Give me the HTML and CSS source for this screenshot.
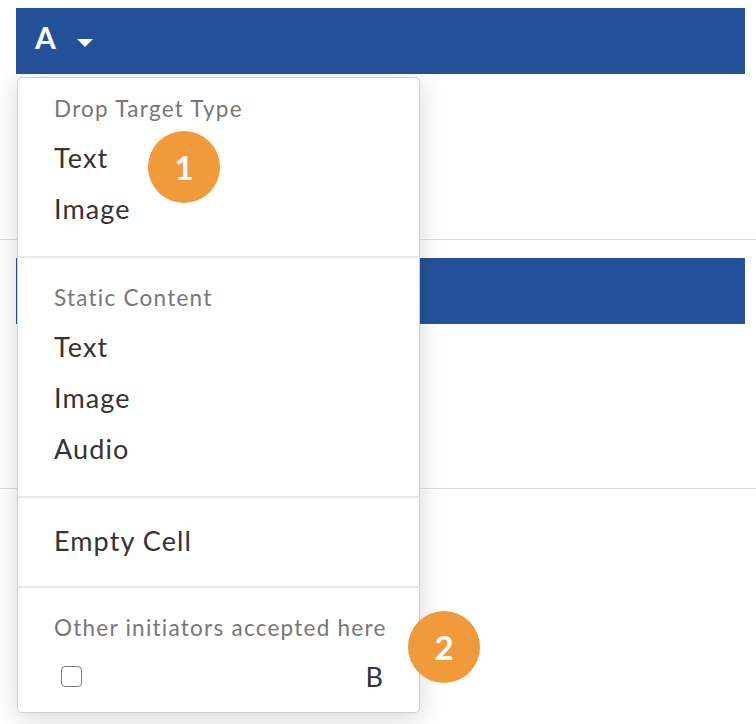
FILE: index.html
```html
<!DOCTYPE html>
<html lang="en">
<head>
<meta charset="utf-8">
<title>Drop target menu</title>
<link rel="stylesheet" href="styles.css">
</head>
<body>
  <div class="board">
    <section class="row row-first">
      <div class="bar">
        <span class="bar-label">A</span>
        <svg class="caret" width="16" height="8" viewBox="0 0 16 8" aria-hidden="true"><path d="M0 0 L16 0 L8 8 Z" fill="#fff"/></svg>
      </div>
      <div class="row-body"></div>
    </section>
    <section class="row row-second">
      <div class="bar"></div>
      <div class="row-body row-body-short"></div>
    </section>
  </div>

  <div class="menu">
    <div class="menu-section menu-section-first">
      <div class="menu-header">Drop Target Type</div>
      <div class="menu-item">Text</div>
      <div class="menu-item">Image</div>
    </div>
    <div class="menu-section">
      <div class="menu-header">Static Content</div>
      <div class="menu-item">Text</div>
      <div class="menu-item">Image</div>
      <div class="menu-item">Audio</div>
    </div>
    <div class="menu-section menu-section-single">
      <div class="menu-item">Empty Cell</div>
    </div>
    <div class="menu-section menu-section-last">
      <div class="menu-header">Other initiators accepted here</div>
      <div class="menu-item check-row">
        <span class="checkbox"></span>
        <span class="check-label">B</span>
      </div>
    </div>
  </div>

  <span class="badge badge-one">1</span>
  <span class="badge badge-two">2</span>
</body>
</html>
```

FILE: styles.css
```css
html, body {
  margin: 0;
  padding: 0;
  background: #ffffff;
}

body {
  position: relative;
  width: 756px;
  height: 724px;
  overflow: hidden;
  font-family: "Lato", "Liberation Sans", sans-serif;
}

.row {
  padding: 0 11px 0 16px;
  border-bottom: 1px solid #dddddd;
}

.row-first {
  padding-top: 8px;
}

.row-second {
  padding-top: 18px;
}

.bar {
  height: 66px;
  background: #24529a;
  display: flex;
  align-items: flex-start;
  padding: 15px 0 0 19px;
  box-sizing: border-box;
}

.bar-label {
  color: #ffffff;
  font-weight: 700;
  font-size: 30px;
  line-height: 29px;
  letter-spacing: 0.5px;
}

.caret {
  display: block;
  margin: 15.5px 0 0 21px;
}

.row-body {
  height: 165px;
}

.row-body-short {
  height: 164px;
}

.menu {
  position: absolute;
  left: 17px;
  top: 77px;
  width: 403px;
  box-sizing: border-box;
  background: #ffffff;
  border: 1px solid #cfcfcf;
  border-radius: 5px;
  box-shadow: 0 5px 24px rgba(0, 0, 0, 0.16);
}

.menu-section {
  padding: 17px 36px 22px;
  border-top: 2px solid #e8e8e8;
}

.menu-section-first {
  padding-top: 8px;
  border-top: 0;
}

.menu-section-single {
  padding-bottom: 20px;
}

.menu-section-last {
  padding-bottom: 10px;
}

.menu-header {
  font-size: 22.5px;
  line-height: 46px;
  color: #777777;
  letter-spacing: 1.25px;
  white-space: nowrap;
}

.menu-item {
  font-size: 27px;
  line-height: 51px;
  color: #333333;
  letter-spacing: 1.1px;
}

.check-row {
  display: flex;
  align-items: center;
  justify-content: space-between;
}

.checkbox {
  display: block;
  width: 21px;
  height: 21px;
  box-sizing: border-box;
  margin-left: 7px;
  border: 1.5px solid #7a7a7a;
  border-radius: 4px;
  background: #ffffff;
}

.check-label {
  letter-spacing: 0;
}

.badge {
  position: absolute;
  width: 72px;
  height: 72px;
  border-radius: 50%;
  background: #f09a3b;
  color: #ffffff;
  font-weight: 700;
  font-size: 33px;
  display: flex;
  align-items: center;
  justify-content: center;
}

.badge-one {
  left: 148px;
  top: 131px;
}

.badge-two {
  left: 408px;
  top: 611px;
}
```
